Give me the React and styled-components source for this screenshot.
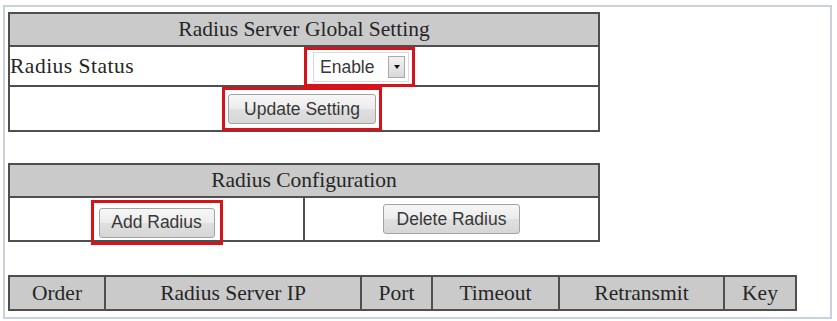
import styled, { createGlobalStyle } from "styled-components";

const GlobalStyle = createGlobalStyle`
  body {
    margin: 0;
    background: #fff;
  }
`;

// outer window frame around the config page
const Frame = styled.div`
  box-sizing: border-box;
  margin: 5px 0 0 3px;
  width: 829px;
  height: 314px;
  border: 2px solid #c9d1dc;
  padding: 5px 0 0 3px;
  display: flex;
  flex-direction: column;
  align-items: flex-start;
`;

const Panel = styled.div`
  box-sizing: border-box;
  width: ${(p) => p.$w}px;
  border: 2px solid #4f4f4f;
  margin-bottom: ${(p) => p.$gap || 0}px;
  font-family: "Liberation Serif", "Times New Roman", serif;
  font-size: 21.5px;
  color: #262626;
`;

const Head = styled.div`
  height: 31px;
  background: #cacaca;
  display: flex;
  align-items: center;
  justify-content: center;
  border-bottom: ${(p) => (p.$last ? "none" : "2px solid #4f4f4f")};
`;

const Row = styled.div`
  height: ${(p) => p.$h}px;
  display: flex;
  align-items: ${(p) => p.$align || "center"};
  justify-content: ${(p) => p.$justify || "flex-start"};
  border-bottom: ${(p) => (p.$last ? "none" : "2px solid #4f4f4f")};
`;

const Cols = styled.div`
  display: grid;
  grid-template-columns: ${(p) => p.$cols};
  grid-template-rows: ${(p) => p.$h}px;
  height: ${(p) => p.$h}px;
  background: ${(p) => p.$bg || "transparent"};
`;

const Cell = styled.div`
  display: flex;
  align-items: ${(p) => p.$align || "center"};
  justify-content: center;
  border-right: ${(p) => (p.$last ? "none" : "2px solid #4f4f4f")};
`;

const Label = styled.div`
  width: 294px;
  align-self: center;
  letter-spacing: 0.5px;
`;

// red annotation rectangle drawn round a control
const Mark = styled.div`
  box-sizing: border-box;
  flex-shrink: 0;
  width: ${(p) => p.$w}px;
  height: ${(p) => p.$h}px;
  border: 3px solid #d8121b;
  display: flex;
  align-items: center;
  justify-content: center;
  margin-left: ${(p) => p.$shift || 0}px;
  margin-top: ${(p) => p.$top || 0}px;
`;

const Button = styled.button`
  box-sizing: border-box;
  width: ${(p) => p.$w}px;
  height: 30px;
  padding: 0;
  font-family: "Liberation Sans", Arial, sans-serif;
  font-size: 17.5px;
  color: #383838;
  background: linear-gradient(#f6f6f6, #ececec 50%, #e0e0e0 50%, #d6d6d6);
  border: 1px solid #a3a3a3;
  border-radius: 3px;
`;

const Select = styled.div`
  box-sizing: border-box;
  width: 96px;
  height: 30px;
  margin-left: 3px;
  display: flex;
  align-items: center;
  justify-content: space-between;
  padding: 0 3px 0 6px;
  border: 1px solid #dadada;
  background: #fff;
  font-family: "Liberation Sans", Arial, sans-serif;
  font-size: 17.5px;
  color: #383838;
`;

const Arrow = styled.div`
  box-sizing: border-box;
  width: 17px;
  height: 22px;
  border: 1px solid #a8a8a8;
  background: linear-gradient(#f3f3f3, #d9d9d9);
  display: flex;
  align-items: center;
  justify-content: center;

  &::after {
    content: "";
    border-left: 3px solid transparent;
    border-right: 3px solid transparent;
    border-top: 4px solid #111;
  }
`;

const serverCols = ["Order", "Radius Server IP", "Port", "Timeout", "Retransmit", "Key"];

export default function App() {
  return (
    <>
      <GlobalStyle />
      <Frame>
        <Panel $w={592} $gap={31}>
          <Head>Radius Server Global Setting</Head>
          <Row $h={38} $align="flex-start">
            <Label>Radius Status</Label>
            <Mark $w={111} $h={40}>
              <Select>
                Enable
                <Arrow />
              </Select>
            </Mark>
          </Row>
          <Row $h={43} $justify="center" $align="flex-start" $last>
            <Mark $w={160} $h={44} $shift={-4}>
              <Button $w={148}>Update Setting</Button>
            </Mark>
          </Row>
        </Panel>

        <Panel $w={592} $gap={33}>
          <Head>Radius Configuration</Head>
          <Cols $cols="295px 293px" $h={42}>
            <Cell $align="flex-start">
              <Mark $w={132} $h={45} $top={2}>
                <Button $w={116}>Add Radius</Button>
              </Mark>
            </Cell>
            <Cell $last>
              <Button $w={137}>Delete Radius</Button>
            </Cell>
          </Cols>
        </Panel>

        <Panel $w={789}>
          <Cols $cols="96px 256px 71px 127px 165px 70px" $h={32} $bg="#cacaca">
            {serverCols.map((c, i) => (
              <Cell key={c} $last={i === serverCols.length - 1}>
                {c}
              </Cell>
            ))}
          </Cols>
        </Panel>
      </Frame>
    </>
  );
}
